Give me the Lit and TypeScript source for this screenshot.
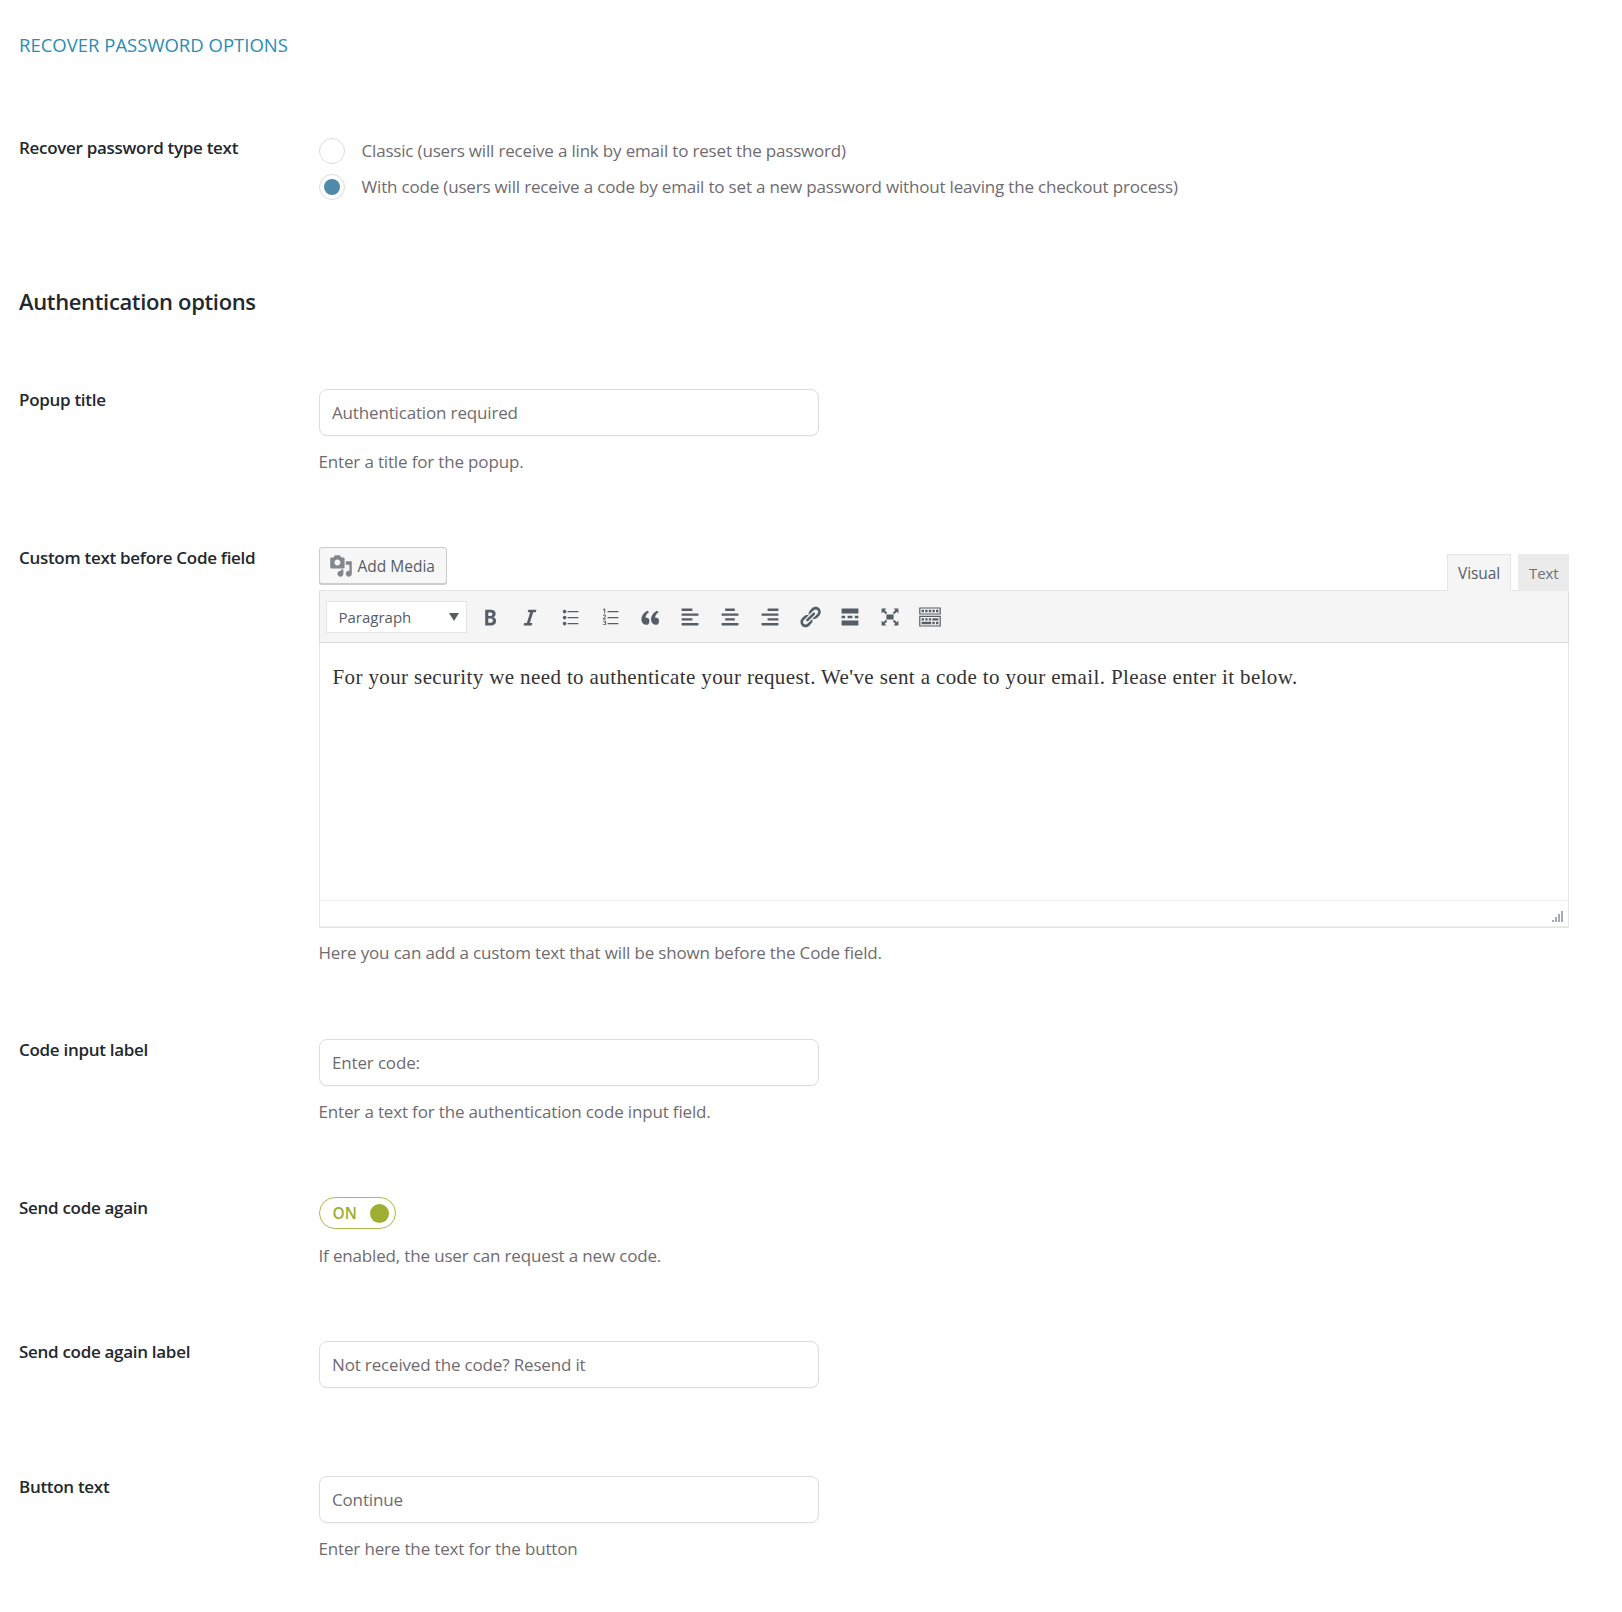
import { LitElement, html, css, svg } from "lit";
import { customElement } from "lit/decorators.js";

const icon = (d: unknown, cls = "ti") => html`<svg class=${cls} viewBox="0 0 20 20" fill="currentColor" fill-rule="evenodd">${d}</svg>`;
const p = (d: string) => svg`<path d=${d}></path>`;

const QUOTE = "M9.49 13.22c0-.74-.2-1.38-.61-1.9-.62-.78-1.83-.88-2.53-.72-.29-1.65 1.11-3.75 2.92-4.65L7.88 4.7c-2.73 1.3-5.42 4.28-4.96 8.05.29 2.39 1.98 3.75 3.84 3.75.8 0 1.47-.23 2-.7.49-.64.73-1.51.73-2.58z";
const ICONS = [
  p("M6 4v13h4.54c1.37 0 2.46-.33 3.26-1 .8-.66 1.2-1.58 1.2-2.77 0-.84-.17-1.51-.51-2.01s-.9-.85-1.67-1.03v-.09c.57-.1 1.02-.4 1.36-.9s.51-1.13.51-1.91c0-1.14-.39-1.98-1.17-2.5C12.75 4.26 11.5 4 9.78 4H6zm2.57 5.15V6.26h1.36c.73 0 1.27.11 1.61.32.34.22.51.58.51 1.07 0 .54-.16.92-.47 1.15s-.82.35-1.51.35h-1.5zm0 2.19h1.6c1.44 0 2.16.53 2.16 1.61 0 .6-.17 1.05-.51 1.34s-.86.43-1.57.43H8.57v-3.38z"),
  p("M14.78 6h-2.13l-2.8 9h2.12l-.62 2H4.6l.62-2h2.14l2.8-9H8.03l.62-2h6.75z"),
  p("M5.5 7C4.67 7 4 6.33 4 5.5 4 4.68 4.67 4 5.5 4 6.32 4 7 4.68 7 5.5 7 6.33 6.32 7 5.5 7zM8 5h9v1H8V5zm-2.5 7c-.83 0-1.5-.67-1.5-1.5C4 9.68 4.67 9 5.5 9c.82 0 1.5.68 1.5 1.5 0 .83-.68 1.5-1.5 1.5zM8 10h9v1H8v-1zm-2.5 7c-.83 0-1.5-.67-1.5-1.5 0-.82.67-1.5 1.5-1.5.82 0 1.5.68 1.5 1.5 0 .83-.68 1.5-1.5 1.5zM8 15h9v1H8v-1z"),
  p("M6 7V3h-.69L4.02 4.03l.4.51.46-.37c.06-.05.16-.14.3-.28l-.02.42V7H6zm2-2h9v1H8V5zm-1.23 6.95v-.7H5.05v-.04l.51-.48c.33-.31.57-.54.7-.71.14-.17.24-.33.3-.49.07-.16.1-.33.1-.51 0-.21-.05-.4-.16-.56-.1-.16-.25-.28-.44-.37s-.41-.14-.65-.14c-.19 0-.36.02-.51.06-.15.03-.29.09-.42.15-.12.07-.29.19-.48.35l.45.54c.16-.13.31-.23.45-.3.15-.07.3-.1.45-.1.14 0 .25.03.34.11s.13.18.13.31c0 .12-.02.23-.06.33s-.1.21-.19.32c-.09.11-.28.32-.57.63l-.99 1.11v.58h2.77zM8 10h9v1H8v-1zm-2.3 3.1h-1.5v.6h1.3c.3 0 .5.15.5.4s-.2.4-.5.4h-.7v.6h.7c.4 0 .6.2.6.45s-.25.45-.6.45H4.1v.6h1.5c.8 0 1.3-.45 1.3-1.05 0-.4-.2-.7-.6-.8.3-.15.5-.4.5-.75 0-.55-.45-.9-1.1-.9zM8 15h9v1H8v-1z"),
  svg`<path d=${QUOTE}></path><path transform="translate(8 0)" d=${QUOTE}></path>`,
  p("M12 5V3H3v2h9zm5 4V7H3v2h14zm-5 4v-2H3v2h9zm5 4v-2H3v2h14z"),
  p("M14 5V3H6v2h8zm3 4V7H3v2h14zm-3 4v-2H6v2h8zm3 4v-2H3v2h14z"),
  p("M17 5V3H8v2h9zm0 4V7H3v2h14zm0 4v-2H8v2h9zm0 4v-2H3v2h14z"),
  p("M17.74 2.76c1.68 1.69 1.68 4.41 0 6.1l-1.53 1.52c-1.12 1.12-2.7 1.47-4.14 1.09l2.62-2.61.76-.77.76-.76c.84-.84.84-2.2 0-3.04-.84-.85-2.2-.85-3.04 0l-.77.76-3.38 3.38c-.37-1.44-.02-3.02 1.1-4.14l1.52-1.53c1.69-1.68 4.42-1.68 6.1 0zM8.59 13.43l5.34-5.34c.42-.42.42-1.1 0-1.52-.44-.43-1.13-.39-1.53 0l-5.33 5.34c-.42.42-.42 1.1 0 1.52.44.43 1.13.39 1.52 0zm-.76 2.29l4.14-4.15c.38 1.44.03 3.02-1.09 4.14l-1.52 1.53c-1.69 1.68-4.41 1.68-6.1 0-1.68-1.68-1.68-4.42 0-6.1l1.53-1.52c1.12-1.12 2.7-1.47 4.14-1.1l-4.14 4.15c-.85.84-.85 2.2 0 3.05.84.84 2.2.84 3.04 0z"),
  p("M17 7V3H3v4h14zM6 11V9H3v2h3zm6 0V9H8v2h4zm5 0V9h-3v2h3zm0 6v-4H3v4h14z"),
  p("M7 8h6v4H7zM2.5 3H7L5.6 4.4 7.7 6.5 6.5 7.7 4.4 5.6 3 7V3zM17.5 3H13l1.4 1.4-2.1 2.1 1.2 1.2 2.1-2.1L17 7V3zM2.5 17H7l-1.4-1.4 2.1-2.1-1.2-1.2-2.1 2.1L3 13v4zM17.5 17H13l1.4-1.4-2.1-2.1 1.2-1.2 2.1 2.1L17 13v4z"),
  p("M19 2v6H1V2h18zm-1 5V3H2v4h16zM5 4v2H3V4h2zm3 0v2H6V4h2zm3 0v2H9V4h2zm3 0v2h-2V4h2zm3 0v2h-2V4h2zm2 5v9H1V9h18zm-1 8v-7H2v7h16zM5 11v2H3v-2h2zm3 0v2H6v-2h2zm3 0v2H9v-2h2zm6 0v2h-5v-2h5zm-6 3v2H3v-2h8zm3 0v2h-2v-2h2zm3 0v2h-2v-2h2z"),
];
const MEDIA = p("M13 11V4c0-.55-.45-1-1-1h-1.67L9 1H5L3.67 3H2c-.55 0-1 .45-1 1v7c0 .55.45 1 1 1h10c.55 0 1-.45 1-1zM7 4.5c1.38 0 2.5 1.12 2.5 2.5S8.38 9.5 7 9.5 4.5 8.38 4.5 7 5.62 4.5 7 4.5zM14 6h5v10.5c0 1.38-1.12 2.5-2.5 2.5S14 17.88 14 16.5s1.12-2.5 2.5-2.5c.17 0 .34.02.5.05V9h-3V6zm-4 8.05V13h2v3.5c0 1.38-1.12 2.5-2.5 2.5S7 17.88 7 16.5 8.12 14 9.5 14c.17 0 .34.02.5.05z");

@customElement("app-root")
export class AppRoot extends LitElement {
  static styles = css`
    :host { display: block; width: 1622px; height: 1612px; box-sizing: border-box; padding: 34px 53px 0 19px; background: #fff; color: #6f6b70; font: 17px/22px "Open Sans", "Noto Sans", sans-serif; letter-spacing: -0.16px; }
    * { box-sizing: border-box; }
    .title { margin: 0; color: #2b8cb3; font-size: 18.5px; line-height: 22px; font-weight: 400; letter-spacing: 0; }
    .row { display: flex; }
    .label { width: 299.5px; flex: none; color: #23282d; font-weight: 600; font-size: 17px; line-height: 22px; letter-spacing: -0.3px; }
    .field { flex: 1; min-width: 0; }
    .radios { display: flex; flex-direction: column; gap: 10px; }
    .radio { display: flex; align-items: center; gap: 17px; height: 26px; letter-spacing: -0.18px; }
    .dot { width: 26px; height: 26px; border-radius: 50%; border: 1px solid #ddd; background: #fff; display: flex; align-items: center; justify-content: center; flex: none; }
    .dot i { width: 16px; height: 16px; border-radius: 50%; background: #4f8ba8; }
    h2 { margin: 0; color: #23282d; font-size: 22px; line-height: 30px; font-weight: 600; letter-spacing: -0.35px; }
    .input { display: block; width: 500px; height: 47px; padding: 0 12.5px; border: 1px solid #ddd; border-radius: 8px; background: #fff; font: inherit; color: #6f6b70; letter-spacing: inherit; outline: none; box-shadow: 0 1px 1px rgba(0,0,0,.03); }
    .desc { margin: 15px 0 0; line-height: 22px; }
    .after-editor { margin-top: 14px; }
    .media-row { display: flex; justify-content: space-between; align-items: flex-end; height: 43px; }
    .add { display: flex; align-items: center; gap: 5px; width: 128px; height: 37px; margin-bottom: 6px; padding: 0 9px; border: 1px solid #ccc; border-radius: 3px; background: #f7f7f7; box-shadow: 0 1px 0 #ccc; color: #555d66; font-size: 15.5px; letter-spacing: 0; white-space: nowrap; }
    .add svg { width: 24px; height: 24px; color: #82878c; flex: none; }
    .tabs { display: flex; gap: 7px; margin-bottom: -1px; position: relative; z-index: 1; }
    .tab { height: 37px; padding: 0 10px; display: flex; align-items: center; font-size: 15.5px; letter-spacing: -0.1px; color: #555d66; border: 1px solid #e5e5e5; }
    .tab.on { background: #f5f5f5; border-bottom-color: #f5f5f5; width: 64px; }
    .tab.off { background: #ebebeb; border-color: #ebebeb; width: 51px; font-size: 15px; color: #6b7077; }
    .editor { border: 1px solid #e5e5e5; }
    .bar { display: flex; align-items: center; height: 52px; padding-left: 6px; background: #f5f5f5; border-bottom: 1px solid #ddd; box-shadow: 0 1px 2px rgba(0,0,0,.1); }
    .select { width: 141px; height: 32px; display: flex; align-items: center; justify-content: space-between; padding: 0 7px 0 12px; background: #fff; border: 1px solid #e5e5e5; color: #555d66; font-size: 15px; letter-spacing: 0; margin-right: 11px; }
    .caret { width: 0; height: 0; border: 5px solid transparent; border-top: 8px solid #555d66; border-bottom: 0; }
    .icons { display: flex; gap: 16px; }
    .ti { width: 24px; height: 24px; color: #555d66; flex: none; display: block; }
    .body { height: 257px; padding: 21px 13px 0; background: #fff; color: #333; font: 21px/27px "Liberation Serif", serif; letter-spacing: .38px; }
    .status { height: 27px; border-top: 1px solid #eee; border-bottom: 1px solid #eee; position: relative; background: #fff; }
    .grip { position: absolute; right: 4px; bottom: 4px; width: 12px; height: 12px; }
    .toggle { display: flex; align-items: center; justify-content: space-between; width: 77px; height: 32px; padding: 0 6px 0 13px; border: 1px solid #a9bb4d; border-radius: 16px; background: #fff; color: #9cae33; font-size: 15.5px; font-weight: 600; letter-spacing: 0; }
    .toggle i { width: 19px; height: 19px; border-radius: 50%; background: #9fad33; }
    .r1 { margin-top: 82px; }
    .r1 .label { margin-top: -1px; }
    .h { margin-top: 86px; }
    .r2 { margin-top: 73px; }
    .r3, .r5, .r6 { margin-top: 74px; }
    .r4 { margin-top: 75px; }
    .r7 { margin-top: 88px; }
    .tog-desc { margin-top: 16px; }
  `;

  private inputRow(cls: string, label: string, value: string, desc?: string) {
    return html`<div class="row ${cls}">
      <div class="label">${label}</div>
      <div class="field">
        <input class="input" .value=${value} />
        ${desc ? html`<p class="desc">${desc}</p>` : ""}
      </div>
    </div>`;
  }

  render() {
    return html`
      <h1 class="title">RECOVER PASSWORD OPTIONS</h1>
      <div class="row r1">
        <div class="label">Recover password type text</div>
        <div class="field radios">
          <div class="radio"><span class="dot"></span>Classic (users will receive a link by email to reset the password)</div>
          <div class="radio"><span class="dot"><i></i></span>With code (users will receive a code by email to set a new password without leaving the checkout process)</div>
        </div>
      </div>
      <h2 class="h">Authentication options</h2>
      ${this.inputRow("r2", "Popup title", "Authentication required", "Enter a title for the popup.")}
      <div class="row r3">
        <div class="label">Custom text before Code field</div>
        <div class="field">
          <div class="media-row">
            <div class="add">${icon(MEDIA, "")}Add Media</div>
            <div class="tabs"><div class="tab on">Visual</div><div class="tab off">Text</div></div>
          </div>
          <div class="editor">
            <div class="bar">
              <div class="select">Paragraph<span class="caret"></span></div>
              <div class="icons">${ICONS.map((d) => icon(d))}</div>
            </div>
            <div class="body">For your security we need to authenticate your request. We've sent a code to your email. Please enter it below.</div>
            <div class="status">
              <svg class="grip" viewBox="0 0 12 12" fill="#a5aab5">
                <rect x="0" y="10" width="2" height="2"></rect><rect x="3" y="7" width="2" height="5"></rect><rect x="6" y="4" width="2" height="8"></rect><rect x="9" y="1" width="2" height="11"></rect>
              </svg>
            </div>
          </div>
          <p class="desc after-editor">Here you can add a custom text that will be shown before the Code field.</p>
        </div>
      </div>
      ${this.inputRow("r4", "Code input label", "Enter code:", "Enter a text for the authentication code input field.")}
      <div class="row r5">
        <div class="label">Send code again</div>
        <div class="field">
          <div class="toggle">ON<i></i></div>
          <p class="desc tog-desc">If enabled, the user can request a new code.</p>
        </div>
      </div>
      ${this.inputRow("r6", "Send code again label", "Not received the code? Resend it")}
      ${this.inputRow("r7", "Button text", "Continue", "Enter here the text for the button")}
    `;
  }
}
